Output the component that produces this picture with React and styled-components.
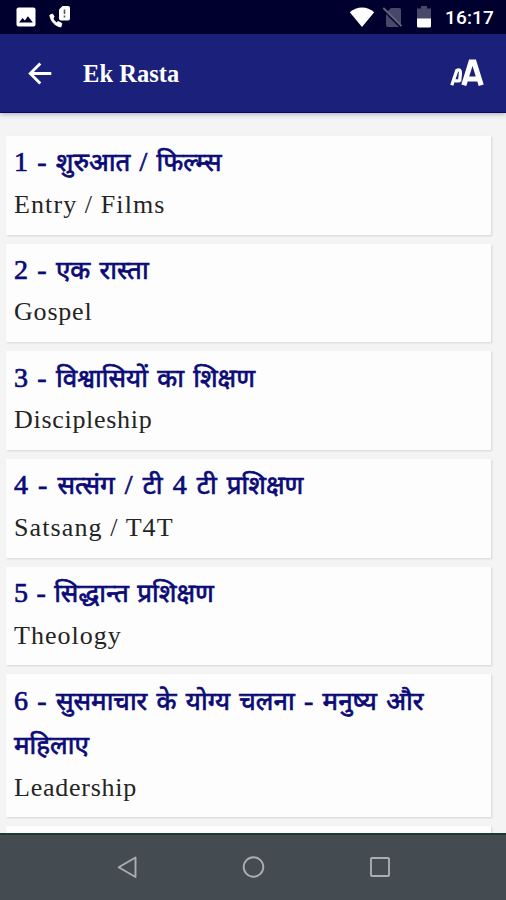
import React from 'react';
import styled, { createGlobalStyle } from 'styled-components';

const GlobalStyle = createGlobalStyle`
  * { box-sizing: border-box; }
  body { margin: 0; overflow: hidden; background: #f4f4f4; }
`;

const Screen = styled.div`
  width: 506px;
  height: 900px;
  display: flex;
  flex-direction: column;
  overflow: hidden;
  background: #f4f4f4;
`;

const StatusBar = styled.div`
  height: 34px;
  flex: none;
  display: flex;
  align-items: center;
  justify-content: space-between;
  padding: 0 11px 0 16px;
  background: #00002f;
`;

const IconGroup = styled.div`
  display: flex;
  align-items: center;
  gap: ${(p) => p.$gap}px;
`;

const Clock = styled.span`
  font: 500 19px/34px Roboto, sans-serif;
  letter-spacing: 0.15px;
  width: 50px;
  white-space: nowrap;
  color: #fff;
  padding-top: 2px;
`;

const AppBar = styled.header`
  height: 79px;
  flex: none;
  display: flex;
  align-items: center;
  padding: 0 21px 0 27px;
  background: #1b217b;
  border-bottom: 1px solid #07086a;
  box-shadow: 0 1px 5px rgba(0, 0, 0, 0.3);
  z-index: 1;
`;

const AppTitle = styled.h1`
  flex: 1;
  margin: 2px 0 0 31px;
  font: bold 24.5px/30px "Liberation Serif", serif;
  letter-spacing: 0.05px;
  color: #fff;
`;

const List = styled.main`
  flex: 1;
  min-height: 0;
  overflow: hidden;
  padding: 23px 15px 0 6px;
  display: flex;
  flex-direction: column;
  gap: 9.2px;
`;

const Card = styled.article`
  flex: none;
  min-height: 98.5px;
  padding: 4.3px 8px 8.6px;
  background: #fdfdfd;
  box-shadow: 1px 1px 2px rgba(0, 0, 0, 0.13);
`;

const CardTitle = styled.h2`
  margin: 0;
  font: 400 28px/44.3px "Liberation Serif", serif;
  -webkit-text-stroke: 0.7px #0b0b78;
  word-spacing: ${(p) => p.$space}px;
  color: #0b0b78;
`;

const Hindi = styled.span`
  font-family: "Noto Sans Devanagari", "Noto Sans", sans-serif;
  font-size: 26px;
  line-height: 1;
`;

const CardSubtitle = styled.p`
  margin: -0.8px 0 0;
  font: 26px/42px "Liberation Serif", serif;
  letter-spacing: ${(p) => p.$track}px;
  color: #242424;
`;

const NavBar = styled.nav`
  height: 67px;
  flex: none;
  display: flex;
  align-items: center;
  justify-content: center;
  gap: 102.5px;
  background: #454c51;
  border-top: 2px solid #173c36;
  z-index: 1;
`;

const topics = [
  { title: '1 - शुरुआत / फिल्म्स', subtitle: 'Entry / Films', space: 2.2, track: 1.1 },
  { title: '2 - एक रास्ता', subtitle: 'Gospel', space: 2.3, track: 0.8 },
  { title: '3 - विश्वासियों का शिक्षण', subtitle: 'Discipleship', space: 2.3, track: 0.7 },
  { title: '4 - सत्संग / टी 4 टी प्रशिक्षण', subtitle: 'Satsang / T4T', space: 3.1, track: 1.1 },
  { title: '5 - सिद्धान्त प्रशिक्षण', subtitle: 'Theology', space: 1.4, track: 1 },
  { title: '6 - सुसमाचार के योग्य चलना - मनुष्य और महिलाए', subtitle: 'Leadership', space: 2.3, track: 0.75 },
];

const mixedScript = (text) =>
  text.split(/([\u0900-\u097F]+)/).map((part, i) => (i % 2 ? <Hindi key={i}>{part}</Hindi> : part));

const ImageIcon = () => (
  <svg width="20" height="20" viewBox="0 0 20 20">
    <rect x="0.5" y="0.5" width="19" height="19" rx="2" fill="#fff" />
    <path d="M3 15.500l3.600-4.600 2.300 2.600 3-4.200 5 6.200z" fill="#00002f" />
  </svg>
);

const CallAlertIcon = () => (
  <svg width="22" height="22" viewBox="0 0 22 22">
    <path d="M.8 9.200C1.800 15 5.500 19.800 11.800 21l1.100-3.500-3.500-2-2 1.200C5.300 15 4.500 13.700 4.100 12.200l1-1.500L3.500 8z" fill="#fff" stroke="#fff" strokeLinejoin="round" />
    <path d="M13.500 0H19a2 2 0 0 1 2 2v10.500a2 2 0 0 1-2 2h-7a2 2 0 0 1-2-2V3.500z" fill="#fff" />
    <path d="M15.500 3.500v4.500M15.500 9.500v2" stroke="#555568" strokeWidth="1.600" />
  </svg>
);

const WifiIcon = () => (
  <svg width="26" height="20" viewBox="0 0 26 20">
    <path d="M.8 5.200C7.500-1.200 18.500-1.200 25.200 5.200L13 20z" fill="#fff" />
  </svg>
);

const NoSimIcon = () => (
  <svg width="20" height="21" viewBox="0 0 20 21">
    <path d="M8 1h8a2 2 0 0 1 2 2v15a2 2 0 0 1-2 2H5a2 2 0 0 1-2-2V6z" fill="#48486a" />
    <path d="M-1 1.500L17.500 20" stroke="#00002f" strokeWidth="2" />
    <path d="M.3 1L18.500 19.200" stroke="#65657d" strokeWidth="1.800" />
  </svg>
);

const BatteryIcon = () => (
  <svg width="14" height="22" viewBox="0 0 14 22">
    <path d="M4 0h6v2.500h4V13H0V2.500h4z" fill="#48486a" />
    <path d="M0 12.500h14V20a1.500 1.500 0 0 1-1.500 1.500h-11A1.500 1.500 0 0 1 0 20z" fill="#fff" />
  </svg>
);

const BackArrow = () => (
  <svg width="25" height="24" viewBox="0 0 25 24" fill="none" stroke="#fff" strokeWidth="2.900">
    <path d="M24.300 12.500H3.500M13.300 2.500L3.300 12.500l10 10" />
  </svg>
);

const TextSizeIcon = () => (
  <svg width="35" height="28" viewBox="0 0 35 28" fill="none" stroke="#fff">
    <path d="M1.800 26.200L6.800 11.500Q10.800 9.500 10.400 14.500L9.600 22.500M4.800 21.800h5" strokeWidth="3.300" />
    <path d="M13.800 26.300L21 3h3l7.200 23.300M17 20h12" strokeWidth="5.200" />
  </svg>
);

const NavIcon = ({ kind }) => (
  <svg width="24" height="24" viewBox="0 0 24 24" fill="none" stroke="#a9aeb0" strokeWidth="1.900" strokeLinejoin="round">
    {kind === 'back' && <path d="M20.500 1.500v19.500L3.700 11.200z" />}
    {kind === 'home' && <circle cx="12.500" cy="11" r="9.800" />}
    {kind === 'recent' && <rect x="3" y="2" width="18" height="18" rx="1" />}
  </svg>
);

export default function App() {
  return (
    <Screen>
      <GlobalStyle />
      <StatusBar>
        <IconGroup $gap={13}>
          <ImageIcon />
          <CallAlertIcon />
        </IconGroup>
        <IconGroup $gap={14}>
          <IconGroup $gap={8}>
            <WifiIcon />
            <NoSimIcon />
          </IconGroup>
          <BatteryIcon />
          <Clock>16:17</Clock>
        </IconGroup>
      </StatusBar>
      <AppBar>
        <BackArrow />
        <AppTitle>Ek Rasta</AppTitle>
        <TextSizeIcon />
      </AppBar>
      <List>
        {topics.map((t) => (
          <Card key={t.subtitle}>
            <CardTitle $space={t.space}>{mixedScript(t.title)}</CardTitle>
            <CardSubtitle $track={t.track}>{t.subtitle}</CardSubtitle>
          </Card>
        ))}
        <Card />
      </List>
      <NavBar>
        <NavIcon kind="back" />
        <NavIcon kind="home" />
        <NavIcon kind="recent" />
      </NavBar>
    </Screen>
  );
}
